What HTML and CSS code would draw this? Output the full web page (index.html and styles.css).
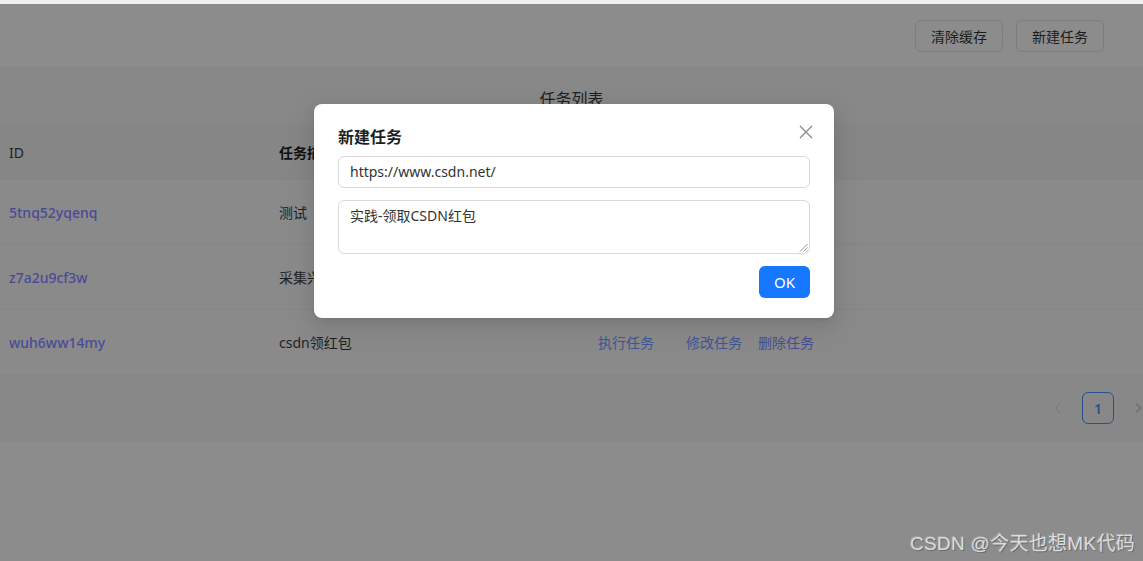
FILE: index.html
```html
<!DOCTYPE html>
<html lang="zh">
<head>
<meta charset="utf-8">
<title>任务列表</title>
<link rel="stylesheet" href="styles.css">
</head>
<body>
<div class="topline"></div>
<header class="toolbar">
  <button class="btn">清除缓存</button>
  <button class="btn">新建任务</button>
</header>
<section class="table-wrap">
  <div class="table-title">任务列表</div>
  <div class="row head">
    <div class="c1">ID</div>
    <div class="c2">任务描述</div>
    <div class="c3">操作</div>
  </div>
  <div class="row">
    <div class="c1"><a class="id">5tnq52yqenq</a></div>
    <div class="c2">测试</div>
    <div class="c3"><a class="act">执行任务</a><a class="act edit">修改任务</a><a class="act del">删除任务</a></div>
  </div>
  <div class="row">
    <div class="c1"><a class="id">z7a2u9cf3w</a></div>
    <div class="c2">采集兴趣数据</div>
    <div class="c3"><a class="act">执行任务</a><a class="act edit">修改任务</a><a class="act del">删除任务</a></div>
  </div>
  <div class="row">
    <div class="c1"><a class="id">wuh6ww14my</a></div>
    <div class="c2">csdn领红包</div>
    <div class="c3"><a class="act">执行任务</a><a class="act edit">修改任务</a><a class="act del">删除任务</a></div>
  </div>
  <div class="pager">
    <span class="arrow">
      <svg width="12" height="12" viewBox="0 0 12 12"><path d="M8 1.5 L3.5 6 L8 10.5" fill="none" stroke="#7a7a7a" stroke-width="1.2"/></svg>
    </span>
    <span class="page">1</span>
    <span class="arrow">
      <svg width="12" height="12" viewBox="0 0 12 12"><path d="M4 1.5 L8.5 6 L4 10.5" fill="none" stroke="#6e6e6e" stroke-width="1.2"/></svg>
    </span>
  </div>
</section>

<div class="modal">
  <div class="modal-head">
    <div class="modal-title">新建任务</div>
    <span class="close">
      <svg width="14" height="14" viewBox="0 0 14 14"><path d="M1 1 L13 13 M13 1 L1 13" stroke="#8c8c8c" stroke-width="1.4" fill="none"/></svg>
    </span>
  </div>
  <div class="field">https://www.csdn.net/</div>
  <div class="field area">实践-领取CSDN红包
    <svg class="grip" width="9" height="9" viewBox="0 0 9 9"><path d="M8.5 1 L1 8.5 M8.5 4.5 L4.5 8.5 M8.5 7.5 L7.5 8.5" stroke="#888" stroke-width="0.9"/></svg>
  </div>
  <div class="modal-foot"><button class="ok">OK</button></div>
</div>

<div class="watermark">CSDN @今天也想MK代码</div>
</body>
</html>
```

FILE: styles.css
```css
* { box-sizing: border-box; }
html, body {
  margin: 0;
  padding: 0;
}
body {
  width: 1143px;
  height: 561px;
  overflow: hidden;
  background: #8c8c8c;
  font-family: "Noto Sans", "Noto Sans CJK SC", sans-serif;
  font-size: 14px;
  color: #1f1f1f;
  position: relative;
}
.topline {
  height: 4px;
  background: #efefef;
}
.toolbar {
  height: 63px;
  display: flex;
  justify-content: flex-end;
  align-items: flex-start;
  gap: 13px;
  padding: 16px 39px 0 0;
}
.btn {
  width: 88px;
  height: 32px;
  border: 1px solid #7d7d7d;
  border-radius: 6px;
  background: #8c8c8c;
  font-family: inherit;
  font-size: 14px;
  color: #1c1c1c;
  padding: 0;
}
.table-wrap {
  background: #888888;
}
.table-title {
  height: 58px;
  display: flex;
  align-items: center;
  justify-content: center;
  font-size: 16px;
  color: #1f1f1f;
  padding-top: 3px;
}
.row {
  display: flex;
  height: 65px;
  align-items: center;
  background: #8a8a8a;
  border-bottom: 1px solid #858585;
}
.row.head {
  height: 55px;
  background: #868686;
  border-bottom: 1px solid #848484;
  font-weight: 600;
  color: #1a1a1a;
}
.row.head .c1 { font-weight: 400; color: #222; }
.c1 { width: 270px; padding-left: 9px; }
.c2 { width: 319px; padding-left: 9px; color: #1f1f1f; }
.row.head .c2 { color: #111; }
.c3 { padding-left: 9px; display: flex; }
.id {
  color: #4a4a98;
  font-weight: 500;
}
.act { color: #3b5797; margin-right: 32px; }
.act.edit { margin-right: 16px; color: #3d5496; }
.act.del { color: #474c96; }
.pager {
  height: 66px;
  display: flex;
  align-items: center;
  justify-content: flex-end;
  gap: 18px;
  margin-right: -1px;
}
.arrow {
  width: 12px;
  height: 32px;
  display: flex;
  align-items: center;
  justify-content: center;
}
.page {
  width: 32px;
  height: 32px;
  border: 1px solid #2f4f8c;
  border-radius: 6px;
  display: flex;
  align-items: center;
  justify-content: center;
  color: #2f4f8c;
  font-weight: 600;
}
.modal {
  position: absolute;
  left: 314px;
  top: 104px;
  width: 520px;
  background: #fff;
  border-radius: 8px;
  padding: 19px 24px 20px 24px;
  box-shadow: 0 6px 16px rgba(0,0,0,0.08), 0 3px 6px -4px rgba(0,0,0,0.12), 0 9px 28px 8px rgba(0,0,0,0.05);
}
.modal-head {
  display: flex;
  justify-content: space-between;
  align-items: center;
  height: 25px;
  margin-bottom: 8px;
}
.modal-title {
  font-size: 16px;
  font-weight: 600;
  color: #1f1f1f;
}
.close {
  display: flex;
  margin-right: -3px;
  margin-top: -7px;
}
.field {
  height: 32px;
  border: 1px solid #d9d9d9;
  border-radius: 6px;
  padding: 4px 11px;
  line-height: 22px;
  color: #333;
  font-size: 14px;
  position: relative;
}
.field.area {
  height: 54px;
  margin-top: 12px;
}
.grip {
  position: absolute;
  right: 1px;
  bottom: 1px;
}
.modal-foot {
  display: flex;
  justify-content: flex-end;
  margin-top: 12px;
}
.ok {
  width: 51px;
  height: 32px;
  border: none;
  border-radius: 6px;
  background: #1677ff;
  color: #fff;
  font-family: inherit;
  font-size: 15px;
  padding: 0;
}
.watermark {
  position: absolute;
  right: 8px;
  bottom: 6px;
  font-size: 19px;
  color: #dcdcdc;
  font-family: "Liberation Sans", "Noto Sans CJK SC", sans-serif;
  text-shadow: 1px 1px 0 #6a6a6a, -1px -1px 0 #a0a0a0;
  letter-spacing: 0.3px;
}
```
